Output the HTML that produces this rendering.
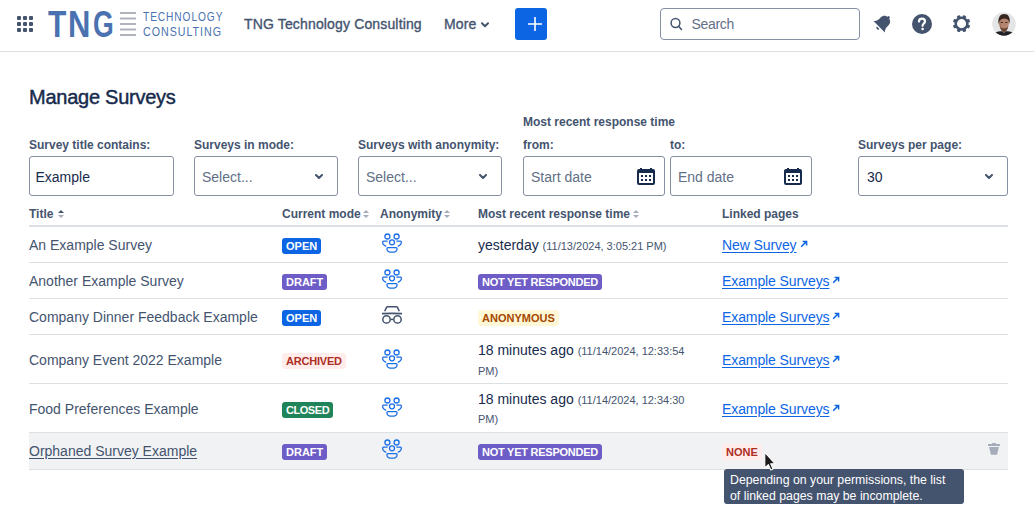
<!DOCTYPE html>
<html><head><meta charset="utf-8">
<style>
*{box-sizing:border-box;margin:0;padding:0}
html,body{width:1034px;height:521px;overflow:hidden;background:#fff}
body{position:relative;font-family:"Liberation Sans",sans-serif;color:#172B4D}
.a{position:absolute;white-space:nowrap;line-height:1}
.lbl{font-size:12px;font-weight:700;color:#44546F}
.th{font-size:12px;font-weight:700;color:#44546F}
.inp{position:absolute;top:156px;height:40px;border:1px solid #8590A2;border-radius:3px;background:#fff}
.inp .t{position:absolute;left:7px;top:13px;font-size:14px;line-height:1;color:#172B4D}
.inp .ph{color:#626F86}
.chev{position:absolute;width:8px;height:5px}
.row{position:absolute;left:29px;width:979px;border-bottom:1px solid #DCDFE4}
.cell{position:absolute;font-size:14px;line-height:1;color:#44546F;white-space:nowrap}
.loz{position:absolute;height:16px;border-radius:3px;font-size:11px;font-weight:700;line-height:16px;padding:0 4px;color:#fff;white-space:nowrap}
.link{color:#0C66E4;text-decoration:underline;text-underline-offset:2px;letter-spacing:-0.1px}
.sort{position:absolute;width:6px;height:8px}
.small{font-size:11px;color:#44546F}
</style></head><body>

<!-- header -->
<svg class="a" style="left:17px;top:16px" width="16" height="16" viewBox="0 0 16 16">
<g fill="#44546F"><rect x="0" y="0" width="4" height="4" rx="1"/><rect x="6" y="0" width="4" height="4" rx="1"/><rect x="12" y="0" width="4" height="4" rx="1"/>
<rect x="0" y="6" width="4" height="4" rx="1"/><rect x="6" y="6" width="4" height="4" rx="1"/><rect x="12" y="6" width="4" height="4" rx="1"/>
<rect x="0" y="12" width="4" height="4" rx="1"/><rect x="6" y="12" width="4" height="4" rx="1"/><rect x="12" y="12" width="4" height="4" rx="1"/></g></svg>

<div class="a" style="left:47.9px;top:6.5px;font-size:36px;font-weight:700;color:#4A72B0;transform:scaleX(0.833);transform-origin:0 0">T</div>
<div class="a" style="left:68.3px;top:6.5px;font-size:36px;font-weight:700;color:#4A72B0;transform:scaleX(0.86);transform-origin:0 0">N</div>
<div class="a" style="left:93.3px;top:6.5px;font-size:36px;font-weight:700;color:#4A72B0;transform:scaleX(0.74);transform-origin:0 0">G</div>
<svg class="a" style="left:120px;top:11px" width="16" height="26" viewBox="0 0 16 26">
<g fill="#B0B3B9"><rect x="0" y="1" width="16" height="2"/><rect x="0" y="6.5" width="16" height="2"/><rect x="0" y="12" width="16" height="2"/><rect x="0" y="17.5" width="16" height="2"/><rect x="0" y="23" width="16" height="2"/></g></svg>
<div class="a" style="left:142.5px;top:9.5px;font-size:13px;font-weight:400;letter-spacing:1.2px;color:#4A72B0;transform:scaleX(0.78);transform-origin:0 0">TECHNOLOGY</div>
<div class="a" style="left:142.5px;top:25px;font-size:13px;font-weight:400;letter-spacing:1.2px;color:#4A72B0;transform:scaleX(0.82);transform-origin:0 0">CONSULTING</div>

<div class="a" style="left:244px;top:17px;font-size:14px;font-weight:400;color:#44546F;letter-spacing:0.15px;-webkit-text-stroke:0.35px #44546F">TNG Technology Consulting</div>
<div class="a" style="left:444px;top:17px;font-size:14px;font-weight:400;color:#44546F;letter-spacing:0.1px;-webkit-text-stroke:0.35px #44546F">More</div>
<svg class="a" style="left:481px;top:21.7px" width="8" height="6" viewBox="0 0 8 6"><path d="M1 1.2 L4 4.2 L7 1.2" fill="none" stroke="#44546F" stroke-width="2" stroke-linecap="round" stroke-linejoin="round"/></svg>

<div class="a" style="left:515px;top:8px;width:32px;height:32px;background:#0C66E4;border-radius:3px"></div>
<svg class="a" style="left:528px;top:17px" width="14" height="14" viewBox="0 0 14 14"><path d="M7 0V14M0 7H14" stroke="#fff" stroke-width="1.6"/></svg>

<div class="a" style="left:660px;top:8px;width:200px;height:32px;border:1px solid #8590A2;border-radius:4px"></div>
<svg class="a" style="left:668px;top:16px" width="16" height="16" viewBox="0 0 16 16"><circle cx="7.5" cy="7" r="4.4" fill="none" stroke="#44546F" stroke-width="1.5"/><path d="M10.6 10.2 L13.5 13.5" stroke="#44546F" stroke-width="1.5" stroke-linecap="round"/></svg>
<div class="a" style="left:691.5px;top:17px;font-size:14px;color:#626F86;letter-spacing:-0.3px">Search</div>

<!-- bell -->
<svg class="a" style="left:868px;top:10px" width="28" height="28" viewBox="0 0 28 28">
<g transform="translate(11.2 16.8) rotate(45) scale(1.17)" fill="#44546F">
<path d="M-6.9 0 L6.9 0 C5.6 -1.2 4.7 -2.6 4.7 -4.6 L4.7 -6.4 C4.7 -9.4 2.9 -11 0 -11 C-2.9 -11 -4.7 -9.4 -4.7 -6.4 L-4.7 -4.6 C-4.7 -2.6 -5.6 -1.2 -6.9 0 Z"/>
<rect x="-1.1" y="-12.2" width="2.2" height="2" rx="0.6"/>
<path d="M-1.6 1.2 H1.6 A1.6 1.6 0 0 1 -1.6 1.2 Z"/>
</g></svg>
<!-- help -->
<svg class="a" style="left:912px;top:14px" width="20" height="20" viewBox="0 0 20 20">
<circle cx="10" cy="10" r="10" fill="#44546F"/>
<path d="M7 7.6 C7 5.8 8.3 4.7 10 4.7 C11.8 4.7 13 5.8 13 7.4 C13 9.4 10.6 9.6 10.6 11.8" fill="none" stroke="#fff" stroke-width="2.2" stroke-linecap="round"/>
<circle cx="10.6" cy="15" r="1.3" fill="#fff"/></svg>
<!-- gear -->
<svg class="a" style="left:947px;top:10px" width="28" height="28" viewBox="0 0 28 28">
<g fill="#44546F" transform="translate(14.55 13.65)">
<circle r="5.8" fill="none" stroke="#44546F" stroke-width="2.5"/>
<rect x="-1.7" y="-8.7" width="3.4" height="3.6" rx="0.9" transform="rotate(22.5)"/><rect x="-1.7" y="-8.7" width="3.4" height="3.6" rx="0.9" transform="rotate(67.5)"/><rect x="-1.7" y="-8.7" width="3.4" height="3.6" rx="0.9" transform="rotate(112.5)"/><rect x="-1.7" y="-8.7" width="3.4" height="3.6" rx="0.9" transform="rotate(157.5)"/><rect x="-1.7" y="-8.7" width="3.4" height="3.6" rx="0.9" transform="rotate(202.5)"/><rect x="-1.7" y="-8.7" width="3.4" height="3.6" rx="0.9" transform="rotate(247.5)"/><rect x="-1.7" y="-8.7" width="3.4" height="3.6" rx="0.9" transform="rotate(292.5)"/><rect x="-1.7" y="-8.7" width="3.4" height="3.6" rx="0.9" transform="rotate(337.5)"/>
</g></svg>
<!-- avatar -->
<svg class="a" style="left:992px;top:12px" width="24" height="24" viewBox="0 0 24 24">
<defs><clipPath id="av"><circle cx="12" cy="12" r="11.8"/></clipPath></defs>
<g clip-path="url(#av)">
<rect width="24" height="24" fill="#E4E5E7"/>
<path d="M0 25 C1 21 4 19.8 8 19.2 L16 19.2 C20 19.8 23 21 24 25 Z" fill="#1E2125"/>
<path d="M9.6 18 L12 21.5 L14.4 18 Z" fill="#9C7362"/>
<path d="M7 6 C7 15.5 9.2 19.6 12.1 19.6 C15 19.6 17.2 15.5 17.2 6 Z" fill="#B48670"/>
<path d="M7 8 C7 14 8 17 10 18.6 C8.6 15 8.4 11 8.8 8 Z" fill="#946852" opacity="0.7"/>
<path d="M8 14.6 C9 18.8 10.5 19.9 12.1 19.9 C13.6 19.9 15.2 18.8 16.2 14.6 C15 16 13.8 16.5 12.1 16.5 C10.3 16.5 9 16 8 14.6 Z" fill="#644536"/>
<path d="M6.5 12.5 C5.6 5 8.4 2 12.3 2 C16.3 2 18.5 5 17.6 12 C17 8.4 16.2 6.9 12.3 6.5 C8.6 6.8 7.3 8.3 6.5 12.5 Z" fill="#35271F"/>
<path d="M8.9 10.5 H11 M13.3 10.5 H15.4" stroke="#3E2C22" stroke-width="1"/>
</g></svg>

<div class="a" style="left:0;top:51px;width:1034px;height:1px;background:#DCDFE4"></div>

<!-- title -->
<div class="a" style="left:29px;top:87px;font-size:20px;font-weight:400;color:#172B4D;letter-spacing:-0.25px;-webkit-text-stroke:0.45px #172B4D">Manage Surveys</div>

<!-- filters -->
<div class="a lbl" style="left:29px;top:139px">Survey title contains:</div>
<div class="a lbl" style="left:194px;top:139px">Surveys in mode:</div>
<div class="a lbl" style="left:358px;top:139px">Surveys with anonymity:</div>
<div class="a lbl" style="left:523px;top:116px">Most recent response time</div>
<div class="a lbl" style="left:523px;top:139px">from:</div>
<div class="a lbl" style="left:670px;top:139px">to:</div>
<div class="a lbl" style="left:858px;top:139px">Surveys per page:</div>

<div class="inp" style="left:29px;width:145px"><div class="t" style="left:5.5px">Example</div></div>
<div class="inp" style="left:194px;width:144px"><div class="t ph">Select...</div>
<svg class="chev" style="left:120px;top:17px" viewBox="0 0 8 5"><path d="M1 1 L4 4 L7 1" fill="none" stroke="#44546F" stroke-width="2" stroke-linecap="round" stroke-linejoin="round"/></svg></div>
<div class="inp" style="left:358px;width:144px"><div class="t ph">Select...</div>
<svg class="chev" style="left:120px;top:17px" viewBox="0 0 8 5"><path d="M1 1 L4 4 L7 1" fill="none" stroke="#44546F" stroke-width="2" stroke-linecap="round" stroke-linejoin="round"/></svg></div>
<div class="inp" style="left:523px;width:142px"><div class="t ph">Start date</div>
<svg class="a" style="left:113px;top:9.5px" width="18" height="18" viewBox="0 0 18 18"><path fill="#172B4D" fill-rule="evenodd" d="M3 1H5V2H13V1H15V2H16A2 2 0 0 1 18 4V16A2 2 0 0 1 16 18H2A2 2 0 0 1 0 16V4A2 2 0 0 1 2 2H3ZM2 6V15.5A0.5 0.5 0 0 0 2.5 16H15.5A0.5 0.5 0 0 0 16 15.5V6Z"/><g fill="#172B4D"><rect x="4" y="8" width="2" height="2"/><rect x="8" y="8" width="2" height="2"/><rect x="12" y="8" width="2" height="2"/><rect x="4" y="12" width="2" height="2"/><rect x="8" y="12" width="2" height="2"/><rect x="12" y="12" width="2" height="2"/></g></svg></div>
<div class="inp" style="left:670px;width:142px"><div class="t ph">End date</div>
<svg class="a" style="left:113px;top:9.5px" width="18" height="18" viewBox="0 0 18 18"><path fill="#172B4D" fill-rule="evenodd" d="M3 1H5V2H13V1H15V2H16A2 2 0 0 1 18 4V16A2 2 0 0 1 16 18H2A2 2 0 0 1 0 16V4A2 2 0 0 1 2 2H3ZM2 6V15.5A0.5 0.5 0 0 0 2.5 16H15.5A0.5 0.5 0 0 0 16 15.5V6Z"/><g fill="#172B4D"><rect x="4" y="8" width="2" height="2"/><rect x="8" y="8" width="2" height="2"/><rect x="12" y="8" width="2" height="2"/><rect x="4" y="12" width="2" height="2"/><rect x="8" y="12" width="2" height="2"/><rect x="12" y="12" width="2" height="2"/></g></svg></div>
<div class="inp" style="left:858px;width:150px"><div class="t" style="left:8px">30</div>
<svg class="chev" style="left:126px;top:17px" viewBox="0 0 8 5"><path d="M1 1 L4 4 L7 1" fill="none" stroke="#44546F" stroke-width="2" stroke-linecap="round" stroke-linejoin="round"/></svg></div>

<!-- table header -->
<div class="a th" style="left:29px;top:207.5px">Title</div>
<svg class="sort" style="left:58px;top:210px" viewBox="0 0 6 8"><path d="M0 3 L3 0 L6 3Z" fill="#44546F"/><path d="M0 5 L3 8 L6 5Z" fill="#A5ADBA"/></svg>
<div class="a th" style="left:282px;top:207.5px">Current mode</div>
<svg class="sort" style="left:363px;top:210px" viewBox="0 0 6 8"><path d="M0 3 L3 0 L6 3Z" fill="#A5ADBA"/><path d="M0 5 L3 8 L6 5Z" fill="#A5ADBA"/></svg>
<div class="a th" style="left:380px;top:207.5px">Anonymity</div>
<svg class="sort" style="left:444px;top:210px" viewBox="0 0 6 8"><path d="M0 3 L3 0 L6 3Z" fill="#A5ADBA"/><path d="M0 5 L3 8 L6 5Z" fill="#A5ADBA"/></svg>
<div class="a th" style="left:478px;top:207.5px">Most recent response time</div>
<svg class="sort" style="left:633px;top:210px" viewBox="0 0 6 8"><path d="M0 3 L3 0 L6 3Z" fill="#A5ADBA"/><path d="M0 5 L3 8 L6 5Z" fill="#A5ADBA"/></svg>
<div class="a th" style="left:722px;top:207.5px">Linked pages</div>
<div class="a" style="left:29px;top:225px;width:979px;height:2px;background:#DCDFE4"></div>

<!-- rows -->
<div class="a" style="left:29px;top:262px;width:979px;height:1px;background:#DCDFE4"></div>
<div class="a" style="left:29px;top:298px;width:979px;height:1px;background:#DCDFE4"></div>
<div class="a" style="left:29px;top:334px;width:979px;height:1px;background:#DCDFE4"></div>
<div class="a" style="left:29px;top:383px;width:979px;height:1px;background:#DCDFE4"></div>
<div class="a" style="left:29px;top:432px;width:979px;height:1px;background:#DCDFE4"></div>
<div class="a" style="left:29px;top:433px;width:979px;height:36px;background:#F1F2F4"></div>
<div class="a" style="left:29px;top:469px;width:979px;height:1px;background:#DCDFE4"></div>

<div class="cell" style="left:29px;top:238px">An Example Survey</div>
<div class="cell" style="left:29px;top:274px">Another Example Survey</div>
<div class="cell" style="left:29px;top:310px">Company Dinner Feedback Example</div>
<div class="cell" style="left:29px;top:353px">Company Event 2022 Example</div>
<div class="cell" style="left:29px;top:402px">Food Preferences Example</div>
<div class="cell" style="left:29px;top:443.5px;text-decoration:underline;text-underline-offset:2px">Orphaned Survey Example</div>

<div class="loz" style="left:282px;top:238px;background:#0C66E4">OPEN</div>
<div class="loz" style="left:282px;top:274px;background:#6E5DC6">DRAFT</div>
<div class="loz" style="left:282px;top:310px;background:#0C66E4">OPEN</div>
<div class="loz" style="left:282px;top:353px;background:#FFECEB;color:#AE2E24;letter-spacing:-0.2px">ARCHIVED</div>
<div class="loz" style="left:282px;top:402px;background:#1F845A;letter-spacing:-0.45px">CLOSED</div>
<div class="loz" style="left:282px;top:444px;background:#6E5DC6">DRAFT</div>

<!-- people icons -->
<svg class="a" style="left:378px;top:229px" width="28" height="28" viewBox="0 0 28 28" id="ppl">
<g fill="none" stroke="#1D6FE8" stroke-width="1.3">
<circle cx="9.4" cy="7.5" r="2.5"/><circle cx="18.6" cy="7.5" r="2.5"/><circle cx="14" cy="13.3" r="2.5"/>
<path d="M9.7 12.1 H5.6 Q4.6 12.1 4.6 13.1 C4.6 15.1 6 16.6 8.2 17.4"/><path d="M18.3 12.1 H22.4 Q23.4 12.1 23.4 13.1 C23.4 15.1 22 16.6 19.8 17.4"/>
<path d="M9.9 18.7 H18.1 Q19.1 18.7 19.1 19.7 C19.1 21.7 17 23.2 14 23.2 C11 23.2 8.9 21.7 8.9 19.7 Q8.9 18.7 9.9 18.7 Z"/>
</g></svg>
<svg class="a" style="left:378px;top:265px" width="28" height="28" viewBox="0 0 28 28">
<g fill="none" stroke="#1D6FE8" stroke-width="1.3">
<circle cx="9.4" cy="7.5" r="2.5"/><circle cx="18.6" cy="7.5" r="2.5"/><circle cx="14" cy="13.3" r="2.5"/>
<path d="M9.7 12.1 H5.6 Q4.6 12.1 4.6 13.1 C4.6 15.1 6 16.6 8.2 17.4"/><path d="M18.3 12.1 H22.4 Q23.4 12.1 23.4 13.1 C23.4 15.1 22 16.6 19.8 17.4"/>
<path d="M9.9 18.7 H18.1 Q19.1 18.7 19.1 19.7 C19.1 21.7 17 23.2 14 23.2 C11 23.2 8.9 21.7 8.9 19.7 Q8.9 18.7 9.9 18.7 Z"/>
</g></svg>
<svg class="a" style="left:378px;top:300px" width="28" height="28" viewBox="0 0 28 28">
<g fill="none" stroke="#44546F" stroke-width="1.5">
<path d="M6.7 11.3 L8.4 7.6 Q8.8 6.7 9.8 6.7 H18.2 Q19.2 6.7 19.6 7.6 L21.3 11.3"/>
<circle cx="8.5" cy="19.4" r="3.7"/><circle cx="19.5" cy="19.4" r="3.7"/><path d="M12.2 19.4 H15.8"/>
</g><path d="M4 12.8 Q14 12.2 24 12.8 V14.6 Q14 14 4 14.6Z" fill="#44546F"/></svg>
<svg class="a" style="left:378px;top:344.5px" width="28" height="28" viewBox="0 0 28 28">
<g fill="none" stroke="#1D6FE8" stroke-width="1.3">
<circle cx="9.4" cy="7.5" r="2.5"/><circle cx="18.6" cy="7.5" r="2.5"/><circle cx="14" cy="13.3" r="2.5"/>
<path d="M9.7 12.1 H5.6 Q4.6 12.1 4.6 13.1 C4.6 15.1 6 16.6 8.2 17.4"/><path d="M18.3 12.1 H22.4 Q23.4 12.1 23.4 13.1 C23.4 15.1 22 16.6 19.8 17.4"/>
<path d="M9.9 18.7 H18.1 Q19.1 18.7 19.1 19.7 C19.1 21.7 17 23.2 14 23.2 C11 23.2 8.9 21.7 8.9 19.7 Q8.9 18.7 9.9 18.7 Z"/>
</g></svg>
<svg class="a" style="left:378px;top:393px" width="28" height="28" viewBox="0 0 28 28">
<g fill="none" stroke="#1D6FE8" stroke-width="1.3">
<circle cx="9.4" cy="7.5" r="2.5"/><circle cx="18.6" cy="7.5" r="2.5"/><circle cx="14" cy="13.3" r="2.5"/>
<path d="M9.7 12.1 H5.6 Q4.6 12.1 4.6 13.1 C4.6 15.1 6 16.6 8.2 17.4"/><path d="M18.3 12.1 H22.4 Q23.4 12.1 23.4 13.1 C23.4 15.1 22 16.6 19.8 17.4"/>
<path d="M9.9 18.7 H18.1 Q19.1 18.7 19.1 19.7 C19.1 21.7 17 23.2 14 23.2 C11 23.2 8.9 21.7 8.9 19.7 Q8.9 18.7 9.9 18.7 Z"/>
</g></svg>
<svg class="a" style="left:378px;top:435px" width="28" height="28" viewBox="0 0 28 28">
<g fill="none" stroke="#1D6FE8" stroke-width="1.3">
<circle cx="9.4" cy="7.5" r="2.5"/><circle cx="18.6" cy="7.5" r="2.5"/><circle cx="14" cy="13.3" r="2.5"/>
<path d="M9.7 12.1 H5.6 Q4.6 12.1 4.6 13.1 C4.6 15.1 6 16.6 8.2 17.4"/><path d="M18.3 12.1 H22.4 Q23.4 12.1 23.4 13.1 C23.4 15.1 22 16.6 19.8 17.4"/>
<path d="M9.9 18.7 H18.1 Q19.1 18.7 19.1 19.7 C19.1 21.7 17 23.2 14 23.2 C11 23.2 8.9 21.7 8.9 19.7 Q8.9 18.7 9.9 18.7 Z"/>
</g></svg>

<!-- response time -->
<div class="cell" style="left:478px;top:238px;color:#172B4D">yesterday <span class="small">(11/13/2024, 3:05:21 PM)</span></div>
<div class="loz" style="left:478px;top:274px;background:#6E5DC6;letter-spacing:-0.25px">NOT YET RESPONDED</div>
<div class="loz" style="left:478px;top:310px;background:#FFF7D6;color:#A54800">ANONYMOUS</div>
<div class="cell" style="left:478px;top:342.7px;color:#172B4D">18 minutes ago <span class="small">(11/14/2024, 12:33:54</span></div>
<div class="cell small" style="left:478px;top:365.5px">PM)</div>
<div class="cell" style="left:478px;top:391.7px;color:#172B4D">18 minutes ago <span class="small">(11/14/2024, 12:34:30</span></div>
<div class="cell small" style="left:478px;top:414px">PM)</div>
<div class="loz" style="left:478px;top:444px;background:#6E5DC6;letter-spacing:-0.25px">NOT YET RESPONDED</div>

<!-- linked -->
<div class="cell link" style="left:722px;top:237.5px">New Survey</div>
<svg class="a" style="left:800px;top:240px" width="8" height="8" viewBox="0 0 8 8"><path d="M1.2 6.8 L6.6 1.4 M2.6 1.4 H6.6 V5.4" fill="none" stroke="#0C66E4" stroke-width="1.5"/></svg>
<div class="cell link" style="left:722px;top:273.5px">Example Surveys</div>
<svg class="a" style="left:832px;top:276px" width="8" height="8" viewBox="0 0 8 8"><path d="M1.2 6.8 L6.6 1.4 M2.6 1.4 H6.6 V5.4" fill="none" stroke="#0C66E4" stroke-width="1.5"/></svg>
<div class="cell link" style="left:722px;top:309.5px">Example Surveys</div>
<svg class="a" style="left:832px;top:312px" width="8" height="8" viewBox="0 0 8 8"><path d="M1.2 6.8 L6.6 1.4 M2.6 1.4 H6.6 V5.4" fill="none" stroke="#0C66E4" stroke-width="1.5"/></svg>
<div class="cell link" style="left:722px;top:352.5px">Example Surveys</div>
<svg class="a" style="left:832px;top:355px" width="8" height="8" viewBox="0 0 8 8"><path d="M1.2 6.8 L6.6 1.4 M2.6 1.4 H6.6 V5.4" fill="none" stroke="#0C66E4" stroke-width="1.5"/></svg>
<div class="cell link" style="left:722px;top:401.5px">Example Surveys</div>
<svg class="a" style="left:832px;top:404px" width="8" height="8" viewBox="0 0 8 8"><path d="M1.2 6.8 L6.6 1.4 M2.6 1.4 H6.6 V5.4" fill="none" stroke="#0C66E4" stroke-width="1.5"/></svg>
<div class="loz" style="left:722px;top:444px;background:#FFECEB;color:#AE2E24">NONE</div>

<!-- trash -->
<svg class="a" style="left:986px;top:441px" width="16" height="16" viewBox="0 0 16 16"><g fill="#A5ADBA"><rect x="6" y="2" width="4" height="1.5" rx="0.5"/><rect x="2" y="3" width="12" height="2" rx="0.3"/><path d="M3.1 6 H12.9 L11.1 13.8 H4.9Z"/></g></svg>

<!-- tooltip -->
<div class="a" style="left:724px;top:469px;width:240px;height:35px;background:#44546F;border-radius:3px"></div>
<div class="a" style="left:730px;top:471.7px;font-size:12.3px;line-height:16.3px;color:#fff">Depending on your permissions, the list<br>of linked pages may be incomplete.</div>

<!-- cursor -->
<svg class="a" style="left:760px;top:448px" width="20" height="26" viewBox="0 0 20 26"><path d="M4.8 4.4 L4.8 20 L8.4 16.6 L10.8 22 L13 21 L10.7 15.8 L15.2 15.8 Z" fill="#1A1A1A" stroke="#fff" stroke-width="1.1" stroke-linejoin="round"/></svg>

</body></html>
